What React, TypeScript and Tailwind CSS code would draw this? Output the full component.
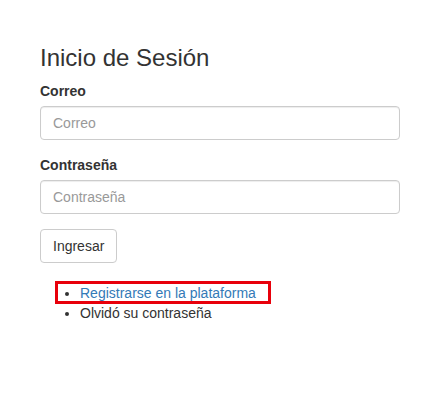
export default function App() {
  return (
    <div className="min-h-[415px] bg-white font-['Liberation_Sans',Arial,sans-serif] text-[14px] leading-[20px] text-[#333]">
      <div className="w-[400px] pl-[40px] pt-[25px]">
        <h3 className="mt-[20px] mb-[10px] text-[24px] font-medium leading-[1.1]">Inicio de Sesión</h3>

        <form onSubmit={(e) => e.preventDefault()}>
          <div className="mb-[15px]">
            <label className="mb-[5px] block font-bold">Correo</label>
            <input
              type="email"
              placeholder="Correo"
              className="block h-[34px] w-full rounded-[4px] border border-[#ccc] px-[12px] py-[6px] text-[14px] text-[#555] shadow-[inset_0_1px_1px_rgba(0,0,0,0.075)] outline-none placeholder:text-[#999]"
            />
          </div>

          <div className="mb-[15px]">
            <label className="mb-[5px] block font-bold">Contraseña</label>
            <input
              type="password"
              placeholder="Contraseña"
              className="block h-[34px] w-full rounded-[4px] border border-[#ccc] px-[12px] py-[6px] text-[14px] text-[#555] shadow-[inset_0_1px_1px_rgba(0,0,0,0.075)] outline-none placeholder:text-[#999]"
            />
          </div>

          <button
            type="submit"
            className="h-[34px] rounded-[4px] border border-[#ccc] bg-white px-[12px] py-[6px] text-[14px] text-[#333]"
          >
            Ingresar
          </button>
        </form>

        <ul className="mt-[20px] list-disc pl-[40px]">
          <li className="relative">
            <a href="#" className="text-[#337ab7]">Registrarse en la plataforma</a>
            <span className="pointer-events-none absolute left-[-25px] top-[-2px] h-[23px] w-[216px] border-[3px] border-[#e8000b]" />
          </li>
          <li>Olvidó su contraseña</li>
        </ul>
      </div>
    </div>
  );
}
